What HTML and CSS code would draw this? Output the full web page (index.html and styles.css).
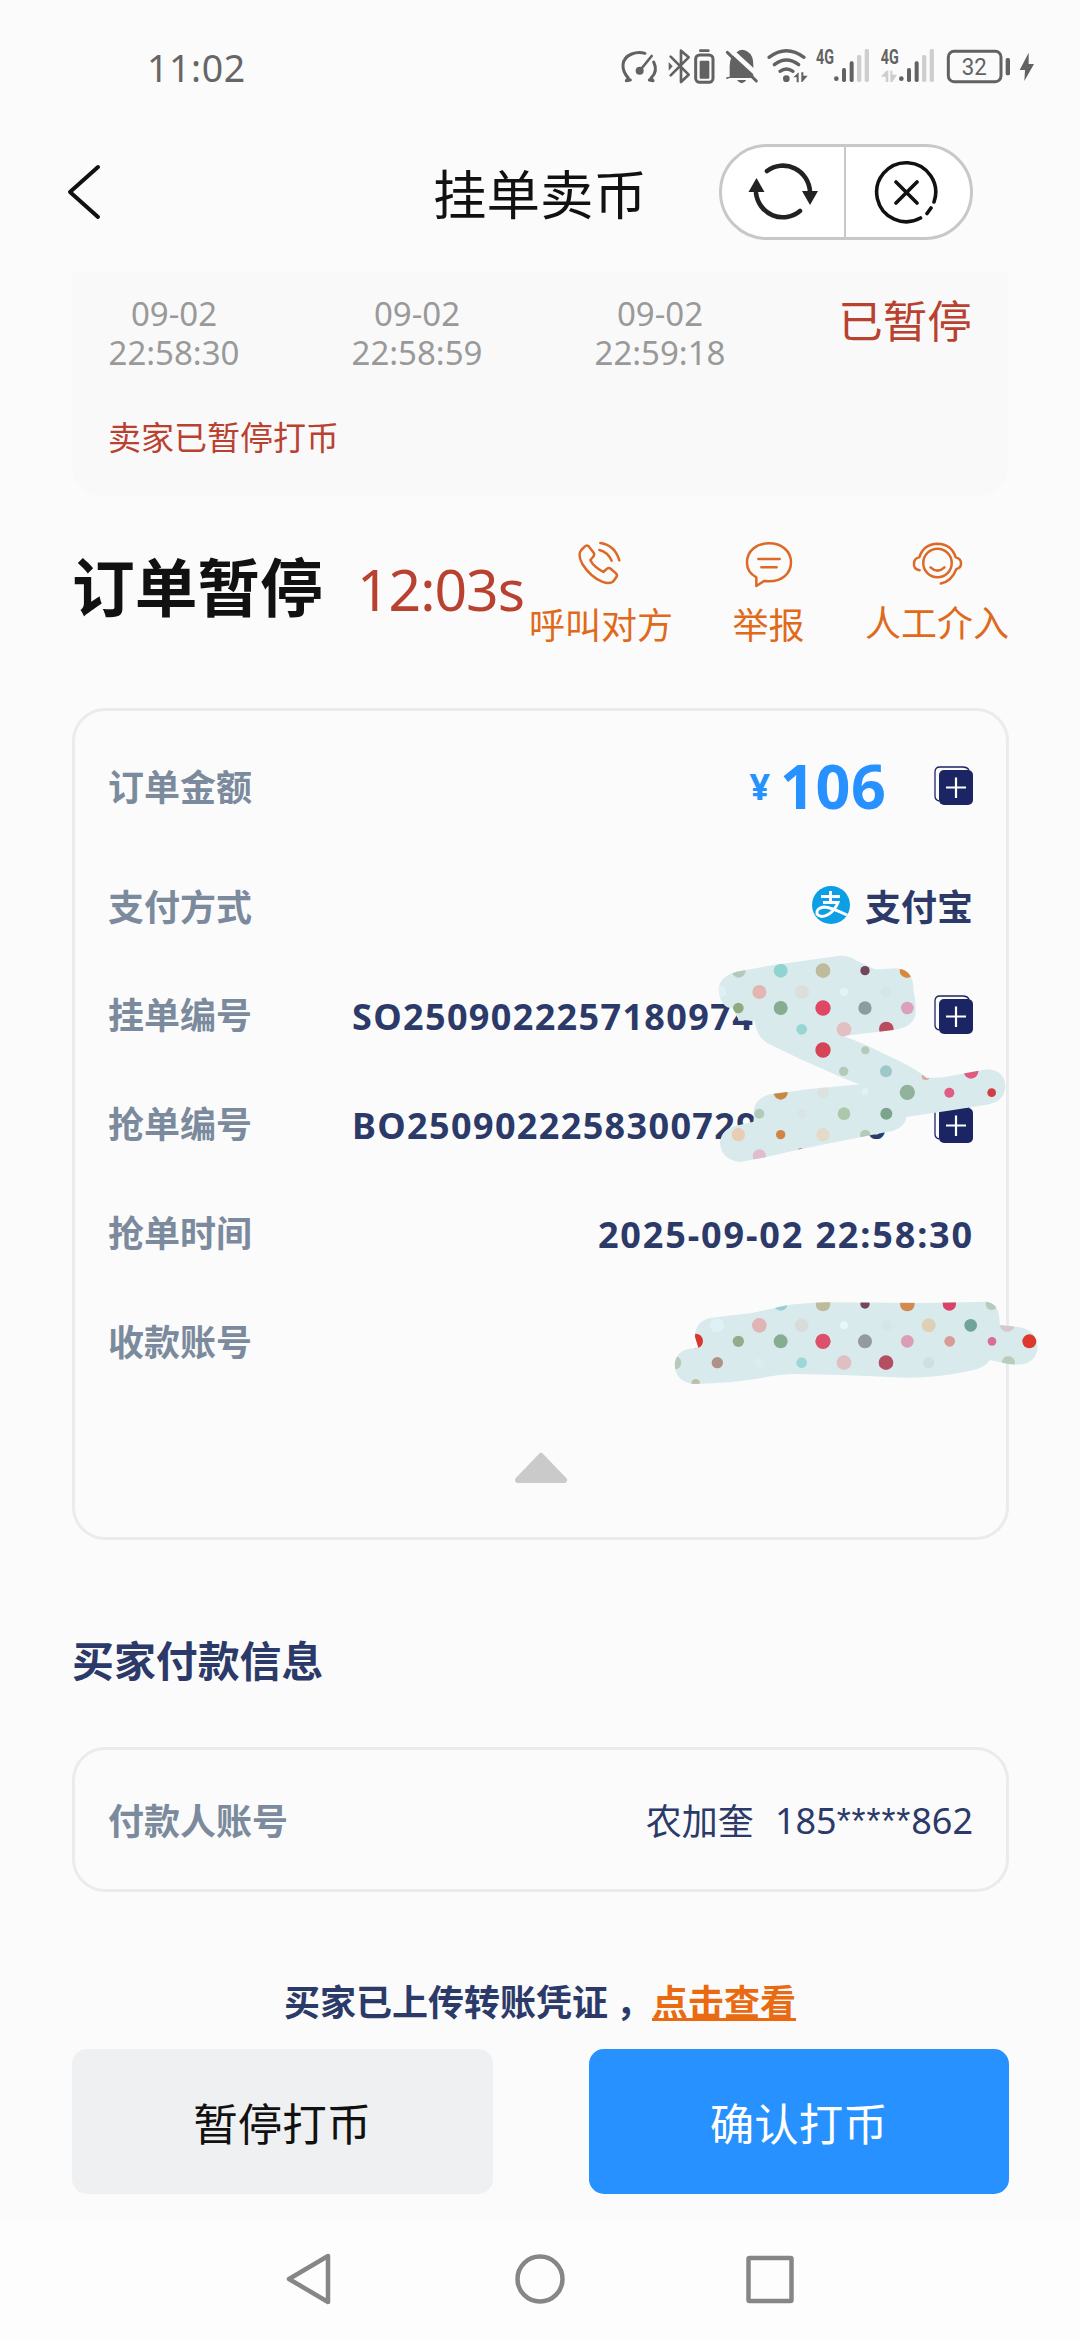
FILE: index.html
```html
<!DOCTYPE html>
<html lang="zh-CN">
<head>
<meta charset="utf-8">
<title>挂单卖币</title>
<link rel="stylesheet" href="styles.css">
</head>
<body>
<svg class="defs" width="0" height="0" aria-hidden="true">
  <symbol id="copy" viewBox="0 0 39 39">
    <path d="M5 35Q1 34 1 30V6Q1 1 6 1H29Q33 1 35 4" fill="none" stroke="#1c2563" stroke-width="1.3"/>
    <rect x="5" y="4" width="34" height="35" rx="5" fill="#1c2563"/>
    <path d="M12 21.5H32M22 11.5V32" stroke="#fff" stroke-width="2.2"/>
  </symbol>
</svg>

<header class="status">
  <span class="clock">11:02</span>
  <svg class="status-icons" viewBox="0 0 1380 240" width="460" height="80">
    <g fill="none" stroke="#626262" stroke-width="9" stroke-linecap="round" stroke-linejoin="round">
      <path d="M76 152L82 144C60 120 58 86 92 72Q112 64 132 70M158 96Q172 124 150 144L156 152M76 152L88 150M156 152L145 150"/>
      <path d="M118 120L152 78" stroke-width="8"/>
      <path d="M209 80L263 134L240 156V62L263 82L209 136" stroke-width="8"/>
      <rect x="284" y="75" width="52" height="82" rx="12"/>
      <path d="M298 62H322" stroke-width="8"/>
      <path d="M504 82Q556 42 609 82" stroke-width="10"/><path d="M520 104Q556 76 593 104" stroke-width="10"/><path d="M537 124Q556 110 576 124" stroke-width="10"/>
      <rect x="1042" y="64" width="158" height="91" rx="17"/>
    </g>
    <g fill="#626262">
      <circle cx="116" cy="122" r="12"/>
      <path d="M203 96L215 109L203 122Z"/>
      <rect x="296" y="92" width="29" height="54" rx="3"/>
      <path d="M386 140V108Q386 78 408 66Q422 54 438 64Q458 76 457 105V144H386L376 148V142Z"/>
      <path d="M408 150H436Q422 170 408 150Z"/>
      <circle cx="556" cy="146" r="10"/>
      <path d="M577 142L593 127V157H587V142ZM601 127H607V137H620L604 156H601Z"/>
      <circle cx="706" cy="146" r="7"/><rect x="723" y="114" width="12" height="42" rx="5"/><rect x="746" y="94" width="12" height="62" rx="5"/>
      <circle cx="901" cy="146" r="7"/><rect x="918" y="114" width="12" height="42" rx="5"/><rect x="941" y="94" width="12" height="62" rx="5"/>
      <rect x="1214" y="84" width="13" height="52" rx="5"/>
      <path d="M1283 68L1256 120H1272L1270 153L1299 102H1283Z"/>
    </g>
    <g fill="#cecece">
      <rect x="768" y="75" width="13" height="81" rx="5"/><rect x="791" y="57" width="13" height="99" rx="5"/>
      <rect x="963" y="75" width="13" height="81" rx="5"/><rect x="986" y="57" width="13" height="99" rx="5"/>
      <path d="M840 140L856 122H862V156H854V140ZM868 122H874V134H888L874 156H868Z"/>
    </g>
    <path d="M374 61L472 151" stroke="#fbfbfb" stroke-width="14" transform="translate(7 -8)"/>
    <path d="M379 67L466 153" stroke="#626262" stroke-width="9" stroke-linecap="round"/>
    <g class="net"><text x="645" y="101" textLength="54" lengthAdjust="spacingAndGlyphs">4G</text><text x="839" y="101" textLength="54" lengthAdjust="spacingAndGlyphs">4G</text></g>
    <text class="pct" x="1082" y="136" textLength="75" lengthAdjust="spacingAndGlyphs">32</text>
  </svg>
</header>

<nav class="titlebar">
  <svg class="back" viewBox="0 0 40 60" width="40" height="60"><path d="M34 6L6 31L34 56" fill="none" stroke="#111" stroke-width="4" stroke-linecap="round" stroke-linejoin="round"/></svg>
  <h1>挂单卖币</h1>
  <div class="capsule">
    <div class="half">
      <svg viewBox="0 0 74 70" width="74" height="70">
        <g fill="none" stroke="#222" stroke-width="4.6" stroke-linecap="round"><path d="M21 14A27 27.5 0 0 1 64 35M54 54A27 27.5 0 0 1 10 36"/></g>
        <path d="M2.500 35L10.500 21L18.500 35ZM56 34H72L64 48Z" fill="#222"/>
      </svg>
    </div>
    <div class="half">
      <svg viewBox="0 0 70 70" width="70" height="70">
        <g fill="none" stroke="#111" stroke-width="3.6" stroke-linecap="round"><path d="M63 45A29.500 29.500 0 1 0 49.500 61M60 51L56 56.500M25 25L46 46M46 25L25 46"/></g>
      </svg>
    </div>
  </div>
</nav>

<main>
  <section class="progress">
    <div class="steps">
      <p><span>09-02</span><span>22:58:30</span></p>
      <p><span>09-02</span><span>22:58:59</span></p>
      <p><span>09-02</span><span>22:59:18</span></p>
      <strong>已暂停</strong>
    </div>
    <p class="notice">卖家已暂停打币</p>
  </section>

  <section class="state">
    <h2>订单暂停</h2>
    <span class="timer">12:03s</span>
    <div class="action call">
      <svg viewBox="0 0 150 150" width="50" height="50"><g fill="none" stroke="#dc6a26" stroke-width="7.500" stroke-linecap="round" stroke-linejoin="round"><path d="M26 20Q33 13 39 20L53 38Q57 45 51 51L43 60Q52 80 82 96L93 86Q99 82 105 87L120 100Q126 107 119 114L112 124Q101 134 78 125Q43 110 19 72Q4 43 16 30Z"/><path d="M73 9Q117 16 130 61M70 30Q95 36 107 62"/></g></svg>
      <span>呼叫对方</span>
    </div>
    <div class="action report">
      <svg viewBox="0 0 150 150" width="50" height="50"><g fill="none" stroke="#dc6a26" stroke-width="7.500" stroke-linecap="round" stroke-linejoin="round"><path d="M37 138V112Q8 96 9 67C9 32 38 10 75 10S141 32 141 67S112 124 75 124L60 123Z"/><path d="M43 57H107M52 82H98"/></g></svg>
      <span>举报</span>
    </div>
    <div class="action help">
      <svg viewBox="0 0 160 150" width="53" height="50"><g fill="none" stroke="#dc6a26" stroke-width="7.500" stroke-linecap="round" stroke-linejoin="round"><circle cx="80" cy="69" r="43"/><path d="M26 91Q7 87 9 70Q10 54 25 52Q38 12 80 11Q122 12 135 52Q151 56 151 70Q151 85 137 87Q123 124 90 131M59 82Q80 102 101 82"/></g></svg>
      <span>人工介入</span>
    </div>
  </section>

  <section class="card order">
    <div class="row amount"><span class="label">订单金额</span><span class="yen">¥</span><b class="sum">106</b><svg class="copy" width="39" height="39"><use href="#copy"/></svg></div>
    <div class="row pay"><span class="label">支付方式</span>
      <svg class="alipay" viewBox="0 0 38 38" width="38" height="38"><circle cx="19" cy="19" r="19" fill="#0c9fe6"/><g fill="none" stroke="#fff" stroke-width="2.900"><path d="M9 10.500H28M18.500 5V16.500M11 16.500H26Q23 24 17 28Q9 33 5 28Q4 22 12 21Q18 21 35 29"/></g></svg>
      <span class="value">支付宝</span></div>
    <div class="row"><span class="label">挂单编号</span><span class="value id so">SO2509022257180974</span><svg class="copy" width="39" height="39"><use href="#copy"/></svg></div>
    <div class="row"><span class="label">抢单编号</span><span class="value id bo">BO2509022258300729</span><span class="value tail">0</span><svg class="copy" width="39" height="39"><use href="#copy"/></svg></div>
    <div class="row"><span class="label">抢单时间</span><span class="value date">2025-09-02 22:58:30</span></div>
    <div class="row"><span class="label">收款账号</span></div>
    <svg class="fold" viewBox="0 0 54 34" width="54" height="34"><path d="M27 5L50 29H4Z" fill="#cacaca" stroke="#cacaca" stroke-width="6" stroke-linejoin="round"/></svg>
  </section>

  <h3>买家付款信息</h3>
  <section class="card payer"><span class="label">付款人账号</span><span class="name">农加奎</span><span class="acct">185<span class="stars">*****</span>862</span></section>

  <p class="proof">买家已上传转账凭证<span class="comma">，</span><a>点击查看</a></p>
  <div class="buttons"><button class="pause">暂停打币</button><button class="confirm">确认打币</button></div>
</main>

<footer>
  <svg viewBox="0 0 520 60" width="520" height="60"><g fill="none" stroke="#868686" stroke-width="4.500" stroke-linejoin="round"><path d="M48 7V53L9 30Z"/><circle cx="260" cy="30" r="22.500"/><rect x="468.500" y="9" width="43" height="43" rx="1"/></g></svg>
</footer>

<svg class="mask" viewBox="0 0 1200 720" width="400" height="240">
  <clipPath id="m1"><path id="s1" d="M176 150Q176 110 230 95L340 75L540 47Q570 47 590 62L630 80Q640 88 660 88L710 85Q762 90 760 150Q768 180 767 215Q765 262 700 270L550 288Q600 305 680 345Q760 380 800 414L850 412L980 388Q1035 390 1036 440Q1034 485 980 494L880 510L800 522L740 530Q735 560 700 572L600 592L420 628L300 655L240 666Q185 660 180 610Q182 570 225 558L280 545Q282 535 281 515Q283 475 330 463L450 447L600 433Q560 420 500 392L420 357L340 318Q290 300 284 242L236 240L218 205Q182 205 176 150Z"/></clipPath>
  <use href="#s1" fill="#d9eaed"/>
  <g clip-path="url(#m1)">
    <g fill="#b3cab8"><circle cx="236" cy="92" r="21"/><circle cx="551" cy="394" r="14"/><circle cx="298" cy="521" r="15"/><circle cx="616" cy="331" r="12"/><circle cx="616" cy="585" r="16"/></g>
    <circle cx="362" cy="92" r="21" fill="#90d4d2"/><circle cx="489" cy="92" r="22" fill="#beba9c"/><circle cx="615" cy="92" r="14" fill="#73465b"/><circle cx="741" cy="92" r="22" fill="#d8893e"/>
    <circle cx="298" cy="156" r="21" fill="#e3b5b3"/><circle cx="426" cy="156" r="21" fill="#dbdedb"/><circle cx="552" cy="155" r="12" fill="#e6f3f6"/><circle cx="677" cy="155" r="16" fill="#d5e6ea"/><circle cx="182" cy="155" r="17" fill="#dff0f5"/>
    <circle cx="235" cy="204" r="16" fill="#91ab80"/><circle cx="362" cy="204" r="21" fill="#86ad92"/><circle cx="489" cy="204" r="23" fill="#df4864"/><circle cx="615" cy="204" r="20" fill="#8f9ba2"/><circle cx="742" cy="204" r="19" fill="#dda0b9"/>
    <circle cx="425" cy="268" r="16" fill="#98d6d5"/><circle cx="552" cy="268" r="22" fill="#e2bfc1"/><circle cx="679" cy="267" r="22" fill="#b94d5c"/><circle cx="489" cy="330" r="23" fill="#d54557"/>
    <circle cx="678" cy="394" r="18" fill="#9ec7c7"/><circle cx="797" cy="408" r="12" fill="#dba79d"/><circle cx="742" cy="457" r="23" fill="#91b29c"/><circle cx="868" cy="458" r="15" fill="#e15c84"/><circle cx="933" cy="394" r="22" fill="#df5a80"/><circle cx="995" cy="458" r="13" fill="#d03d42"/>
    <circle cx="362" cy="458" r="21" fill="#c98645"/><circle cx="489" cy="457" r="18" fill="#dce2df"/><circle cx="615" cy="455" r="10" fill="#e1f1f4"/><circle cx="426" cy="521" r="14" fill="#dbe3e4"/><circle cx="552" cy="521" r="19" fill="#adc7ad"/><circle cx="679" cy="521" r="18" fill="#7ba58a"/>
    <circle cx="235" cy="584" r="20" fill="#e8cdb2"/><circle cx="362" cy="584" r="14" fill="#d18445"/><circle cx="489" cy="584" r="20" fill="#e3dac9"/><circle cx="298" cy="648" r="20" fill="#e1bccb"/><circle cx="422" cy="633" r="9" fill="#a9a084"/>
  </g>
</svg>
<svg class="mask account" viewBox="0 0 1500 600" width="500" height="200">
  <clipPath id="m2"><path id="s2" d="M344 492Q350 450 390 446L415 443L405 410Q405 365 450 354L580 338L680 316Q720 310 800 307L1100 309L1280 305Q1312 310 1317 345L1320 375L1380 382Q1430 392 1433 440Q1430 490 1375 494L1345 492L1290 480Q1275 505 1230 512Q1120 535 1040 533L850 525L700 522Q640 525 600 535Q520 550 400 552Q345 545 344 492Z"/></clipPath>
  <use href="#s2" fill="#d9eaed"/>
  <g clip-path="url(#m2)">
    <circle cx="662" cy="312" r="20" fill="#98d0d0"/><circle cx="789" cy="312" r="22" fill="#beba9c"/><circle cx="915" cy="312" r="14" fill="#73465b"/><circle cx="1042" cy="312" r="22" fill="#d38a50"/><circle cx="1168" cy="312" r="20" fill="#d84269"/><circle cx="1295" cy="312" r="18" fill="#b5cbbb"/>
    <circle cx="471" cy="376" r="21" fill="#def1f6"/><circle cx="598" cy="376" r="22" fill="#e0b4b5"/><circle cx="725" cy="376" r="21" fill="#d8dddc"/><circle cx="852" cy="376" r="12" fill="#e9f7fa"/><circle cx="980" cy="376" r="16" fill="#d4e6e9"/><circle cx="1106" cy="376" r="21" fill="#ddd0b7"/><circle cx="1232" cy="376" r="19" fill="#6fa39b"/><circle cx="1342" cy="374" r="22" fill="#d7c6d1"/>
    <circle cx="407" cy="423" r="22" fill="#d7372d"/><circle cx="535" cy="424" r="17" fill="#94ad88"/><circle cx="662" cy="424" r="21" fill="#86ad92"/><circle cx="789" cy="424" r="23" fill="#dc506b"/><circle cx="915" cy="424" r="21" fill="#929b9d"/><circle cx="1042" cy="424" r="19" fill="#da9db5"/><circle cx="1169" cy="424" r="16" fill="#d79b94"/><circle cx="1296" cy="424" r="13" fill="#d96d91"/><circle cx="1408" cy="424" r="21" fill="#dc382d"/>
    <circle cx="344" cy="488" r="20" fill="#b5cab8"/><circle cx="472" cy="488" r="17" fill="#ae9288"/><circle cx="598" cy="488" r="14" fill="#dcecef"/><circle cx="725" cy="488" r="16" fill="#9bd7d9"/><circle cx="852" cy="488" r="22" fill="#dfbfc2"/><circle cx="978" cy="488" r="22" fill="#b34f60"/><circle cx="1106" cy="488" r="17" fill="#cfdfe3"/><circle cx="1345" cy="488" r="20" fill="#b9cdbd"/><circle cx="407" cy="550" r="13" fill="#bcc0a5"/>
  </g>
</svg>
</body>
</html>
```
FILE: styles.css
```css
* { box-sizing: border-box; margin: 0; padding: 0; }
body { position: relative; width: 1080px; height: 2340px; overflow: hidden; background: #fbfbfb; color: #111; font-family: "Noto Sans", "Noto Sans CJK SC", sans-serif; font-size: 36px; display: flex; flex-direction: column; }
svg { display: block; flex: none; }
.defs { position: absolute; }

.status { height: 130px; display: flex; align-items: flex-start; padding: 30px 19px 0 147px; justify-content: space-between; }
.clock { font-size: 37.500px; line-height: 76px; color: #666; letter-spacing: .6px; }
.net { font: 700 58px "Roboto", sans-serif; fill: #626262; }
.pct { font: 400 72px "Roboto", sans-serif; fill: #626262; }

.titlebar { height: 143px; display: flex; padding-left: 64px; }
.back { margin-top: 31px; }
h1 { font-size: 53.500px; font-weight: 400; line-height: 80px; margin: 25px 0 0 329px; width: 214px; white-space: nowrap; }
.capsule { margin: 14px 0 0 72px; width: 254px; height: 96px; border: 3px solid #c8c8c8; border-radius: 48px; background: #fff; display: flex; }
.half { flex: 1; display: flex; align-items: center; justify-content: center; }
.half + .half { border-left: 2px solid #c8c8c8; padding-right: 3px; }

main { padding: 0 72px; height: 1947px; display: flex; flex-direction: column; }
.progress { height: 223px; background: #f9f9f9; border-radius: 0 0 30px 30px; padding: 21px 36px 0; }
.steps { display: grid; grid-template-columns: 132px 132px 132px 135px; column-gap: 111px; height: 115px; font-size: 33px; line-height: 39px; color: #999; text-align: center; }
.steps p { white-space: nowrap; }
.steps span { display: block; height: 39px; }
.steps strong { font-weight: 400; font-size: 44.500px; line-height: 54px; color: #b94130; margin: 0 0 0 1px; white-space: nowrap; }
.notice { font-size: 33px; line-height: 58px; color: #b94130; }

.state { height: 212px; display: flex; align-items: flex-start; }
h2 { font-size: 62.700px; line-height: 80px; margin-top: 51px; width: 250px; white-space: nowrap; color: #111; }
.timer { font-size: 57px; line-height: 80px; margin: 53px 0 0 35px; width: 173px; color: #b94130; letter-spacing: -1px; white-space: nowrap; }
.action { display: flex; flex-direction: column; align-items: center; color: #e06a1c; font-size: 36px; line-height: 50px; margin-top: 44px; white-space: nowrap; }
.action span { margin-top: 11px; }
.call { width: 142px; }
.report { width: 71px; margin-left: 61px; }
.help { width: 142px; margin-left: 62px; }
.help span { margin-top: 9px; }

.card { border: 3px solid #ebebeb; border-radius: 33px; margin-right: -1px; }
.order { height: 832px; padding: 23px 33px 0; }
.row { height: 109px; display: flex; align-items: center; }
.label { color: #7b8b9d; font-weight: 700; line-height: 50px; margin-right: auto; margin-top: 4px; }
.value { color: #2b3a68; font-weight: 700; line-height: 50px; white-space: nowrap; margin-top: 5px; }
.amount { height: 103px; }
.pay { height: 137px; }
.row.pay + .row { height: 80px; margin: 0 0 14.500px; }
.yen { color: #2691ff; font-weight: 700; font-size: 36px; line-height: 50px; margin-right: 10px; margin-top: 2px; }
.sum { color: #2691ff; font-size: 61px; line-height: 80px; letter-spacing: .6px; width: 109px; white-space: nowrap; }
.copy { margin-left: 45px; }
.alipay { margin-right: 15px; margin-top: -1px; }
.id { width: 514px; letter-spacing: 1.350px; }
.tail { width: 23px; }
.so + .copy { margin-left: 68px; }
.date { letter-spacing: 1.850px; margin-right: -1px; }
.fold { margin: 55px auto 0; }

h3 { color: #2b3a68; font-size: 41.900px; line-height: 60px; margin-top: 91px; }
.payer { height: 145px; margin-top: 56px; padding: 0 33px; display: flex; align-items: center; }
.name, .acct { color: #2b3a68; line-height: 50px; margin-top: 4px; }
.name { margin-right: 21px; }
.stars { font-family: "Liberation Sans", sans-serif; letter-spacing: .9px; }
.proof { color: #2b3a68; font-weight: 700; line-height: 50px; margin-top: 86px; text-align: center; white-space: nowrap; }
.comma { margin-left: 8px; }
.proof a { color: #ea6a12; text-decoration: underline; text-decoration-thickness: 3px; text-underline-offset: 2px; }
.buttons { display: flex; gap: 96px; margin: 21px -1px 0 0; }
button { flex: 1; height: 145px; border: 0; border-radius: 15px; font: 400 44.500px "Noto Sans CJK SC", sans-serif; }
.pause { background: #eff0f2; color: #111; }
.confirm { background: #2691ff; color: #fff; }

footer { flex: 1; background: #fdfdfd; display: flex; justify-content: center; align-items: flex-start; padding-top: 29px; }

.mask { position: absolute; left: 660px; top: 940px; }
.account { left: 560px; top: 1200px; }
```
